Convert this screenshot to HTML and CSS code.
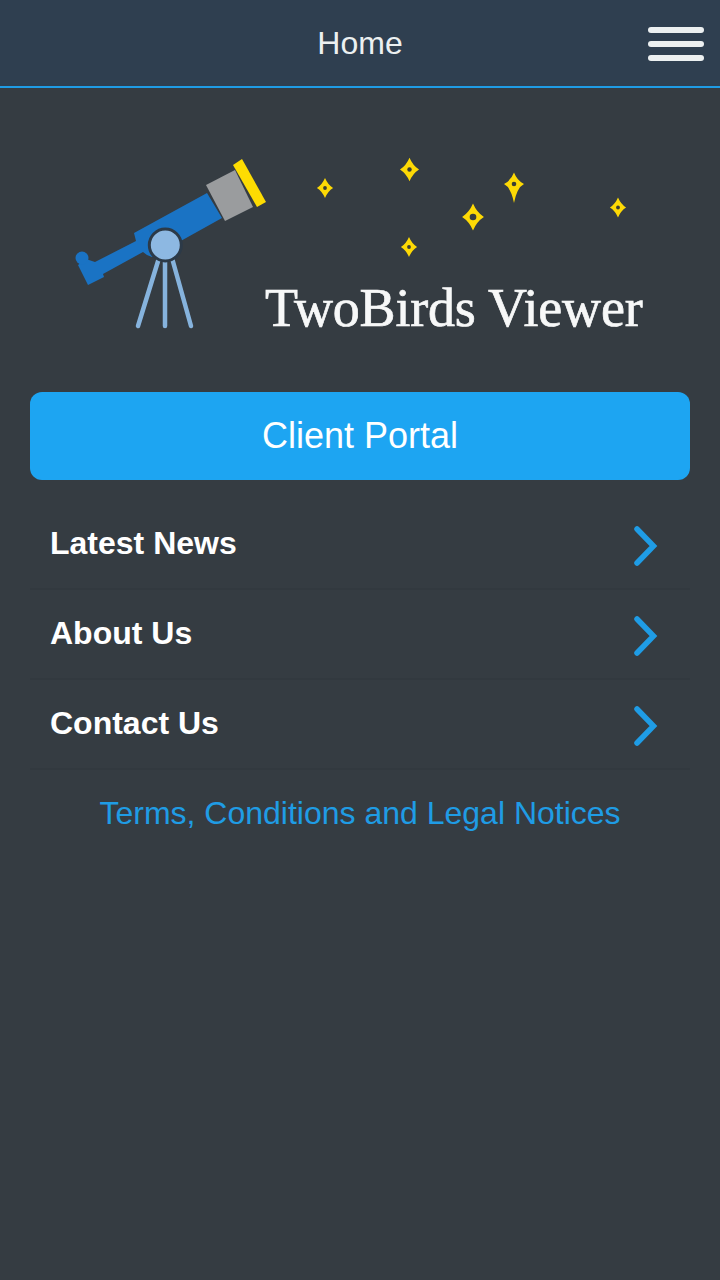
FILE: index.html
```html
<!DOCTYPE html>
<html>
	<head>
		<meta charset="UTF-8" />
		<meta name="viewport" content="width=device-width, initial-scale=1.0" />
		<title>Home</title>
		<link rel="stylesheet" href="styles.css">
	</head>
	<body>
		<header class="topbar">
			<h1 class="topbar-title">Home</h1>
			<button type="button" class="menu-btn" aria-label="Menu">
				<span></span>
				<span></span>
				<span></span>
			</button>
		</header>

		<svg class="logo" viewBox="0 88 720 304" width="720" height="304">
			<defs>
				<g id="star">
					<path d="M0 -10.5 Q3 -3.500 8.500 0 Q3 3.500 0 10.500 Q-3 3.500 -8.500 0 Q-3 -3.500 0 -10.500Z" fill="#fdd905" />
					<circle r="2" fill="#3a3d35" />
				</g>
			</defs>
			<!-- telescope -->
			<path d="M134 233 L207 193 L222 218 L152 257 L147 255 L143 252 L103 274 L104 277 L88 285 L78 265 L86 259 L95 262 L136 241Z" fill="#1a73c4" />
			<circle cx="82" cy="258" r="6.5" fill="#1a73c4" />
			<polygon points="206,185 235,170 253,207 225,221" fill="#9a9c9e" />
			<polygon points="233,165 242,159 266,202 257,207" fill="#fddc02" />
			<g stroke="#86b3dd" stroke-width="4.5" stroke-linecap="round">
				<line x1="159" y1="258" x2="138" y2="326" />
				<line x1="165" y1="260" x2="165" y2="326" />
				<line x1="172" y1="258" x2="191" y2="326" />
			</g>
			<circle cx="165.300" cy="245" r="16" fill="#8db8e2" stroke="#2c3a48" stroke-width="3" />
			<!-- stars -->
			<use href="#star" transform="translate(325 188) scale(.95)" />
			<use href="#star" transform="translate(409.5 169.5) scale(1.12)" />
			<path d="M514 172.500 Q517 180.500 524 184 Q517 187.500 514 203 Q511 187.500 504 184 Q511 180.500 514 172.500Z" fill="#fdd905" />
			<circle cx="514" cy="184" r="2.300" fill="#3a3d35" />
			<g transform="translate(473 217) scale(1.28)">
				<path d="M0 -10.5 Q3 -3.500 8.500 0 Q3 3.500 0 10.500 Q-3 3.500 -8.500 0 Q-3 -3.500 0 -10.500Z" fill="#fdd905" />
				<circle r="2.600" fill="#353c42" />
			</g>
			<use href="#star" transform="translate(409 247) scale(.95)" />
			<use href="#star" transform="translate(618 207.500) scale(.95)" />
			<text class="logo-text" x="265" y="326">TwoBirds Viewer</text>
		</svg>

		<main class="content">
			<a class="portal-btn" href="#">Client Portal</a>
			<ul class="nav-list">
				<li class="nav-row">
					<span class="nav-label">Latest News</span>
					<svg class="chevron" viewBox="0 0 24 40" width="24" height="40"><path d="M3 3 L19.500 20 L3 37" /></svg>
				</li>
				<li class="nav-row">
					<span class="nav-label">About Us</span>
					<svg class="chevron" viewBox="0 0 24 40" width="24" height="40"><path d="M3 3 L19.500 20 L3 37" /></svg>
				</li>
				<li class="nav-row">
					<span class="nav-label">Contact Us</span>
					<svg class="chevron" viewBox="0 0 24 40" width="24" height="40"><path d="M3 3 L19.500 20 L3 37" /></svg>
				</li>
			</ul>
			<a class="terms-link" href="#">Terms, Conditions and Legal Notices</a>
		</main>
	</body>
</html>
```

FILE: styles.css
```css
html,
body {
	margin: 0;
	padding: 0;
}
body {
	min-height: 1280px;
	background-color: #353c42;
	font-family: "Liberation Sans", Arial, sans-serif;
	color: #fff;
}
.topbar {
	box-sizing: border-box;
	height: 88px;
	display: flex;
	align-items: center;
	justify-content: center;
	position: relative;
	background-color: #2f3f50;
	border-bottom: 2px solid #1f9ce5;
}
.topbar-title {
	margin: 0;
	font-size: 32px;
	font-weight: normal;
	color: #ecf0f1;
}
.menu-btn {
	position: absolute;
	top: 27px;
	right: 16px;
	width: 56px;
	padding: 0;
	border: none;
	background: none;
	display: flex;
	flex-direction: column;
	gap: 8px;
}
.menu-btn span {
	display: block;
	height: 6px;
	border-radius: 3px;
	background-color: #ecf0f1;
}
.logo {
	display: block;
}
.logo-text {
	font-family: "Liberation Serif", "Times New Roman", serif;
	font-size: 54px;
	letter-spacing: -0.2px;
	fill: #f7f8f8;
	stroke: #f7f8f8;
	stroke-width: 0.7px;
}
.content {
	padding: 0 30px;
}
.portal-btn {
	display: block;
	height: 88px;
	line-height: 88px;
	border-radius: 12px;
	background-color: #1da5f2;
	color: #fff;
	font-size: 36px;
	text-align: center;
	text-decoration: none;
}
.nav-list {
	list-style: none;
	margin: 20px 0 0;
	padding: 0;
}
.nav-row {
	box-sizing: border-box;
	height: 90px;
	display: flex;
	align-items: center;
	justify-content: space-between;
	padding: 0 32px 0 20px;
	border-bottom: 2px solid #32393f;
}
.nav-label {
	margin-bottom: 2px;
	font-size: 32px;
	font-weight: bold;
}
.chevron {
	margin-top: 4px;
	fill: none;
	stroke: #1f9ce5;
	stroke-width: 5.5;
	stroke-linecap: round;
	stroke-linejoin: miter;
}
.terms-link {
	display: block;
	margin-top: 25px;
	color: #1f9ce5;
	font-size: 32px;
	text-align: center;
	text-decoration: none;
}
```
